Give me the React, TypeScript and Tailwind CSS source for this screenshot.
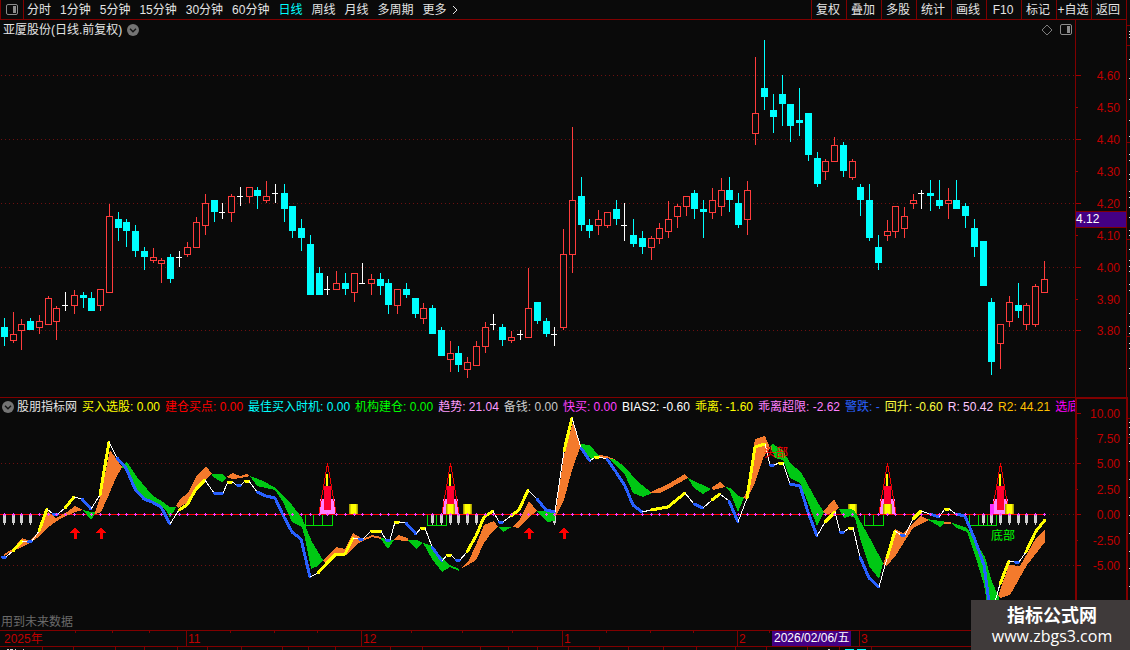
import { Fragment } from 'react'

const periods = ['分时', '1分钟', '5分钟', '15分钟', '30分钟', '60分钟', '日线', '周线', '月线', '多周期']
const actions = ['复权', '叠加', '多股', '统计', '画线', 'F10', '标记', '+自选', '返回']

const readings = [
  { text: '买入选股: 0.00', color: 'text-[#ffff00]' },
  { text: '建仓买点: 0.00', color: 'text-[#ff0000]' },
  { text: '最佳买入时机: 0.00', color: 'text-[#00ffff]' },
  { text: '机构建仓: 0.00', color: 'text-[#00ff00]' },
  { text: '趋势: 21.04', color: 'text-[#ff9cff]' },
  { text: '备钱: 0.00', color: 'text-[#c8c8c8]' },
  { text: '快买: 0.00', color: 'text-[#ff40ff]' },
  { text: 'BIAS2: -0.60', color: 'text-white' },
  { text: '乖离: -1.60', color: 'text-[#ffff00]' },
  { text: '乖离超限: -2.62', color: 'text-[#ff80ff]' },
  { text: '警跌: -', color: 'text-[#2a62ff]' },
  { text: '回升: -0.60', color: 'text-[#ffff40]' },
  { text: 'R: 50.42', color: 'text-[#ffc8ff]' },
  { text: 'R2: 44.21', color: 'text-[#ffc000]' },
  { text: '选底', color: 'text-[#ff00ff]' },
]

// high, body top, body bottom, low, kind: u = up, d = down, x = flat
type Candle = [number, number, number, number, 'u' | 'd' | 'x']
const candles: Candle[] = [
  [318, 327, 337, 346, 'd'], [312, 334, 341, 343, 'u'], [319, 324, 331, 350, 'u'], [318, 321, 330, 330, 'd'],
  [315, 321, 328, 334, 'u'], [296, 298, 325, 325, 'u'], [306, 308, 322, 340, 'u'], [292, 305, 306, 311, 'x'],
  [290, 295, 306, 314, 'u'], [292, 295, 298, 308, 'd'], [292, 298, 311, 311, 'd'], [289, 289, 306, 311, 'u'],
  [204, 216, 293, 293, 'u'], [212, 219, 228, 241, 'd'], [219, 222, 231, 247, 'd'], [225, 231, 251, 257, 'd'],
  [247, 251, 257, 270, 'd'], [248, 257, 261, 263, 'u'], [258, 260, 264, 283, 'u'], [254, 257, 279, 283, 'd'],
  [251, 257, 258, 267, 'x'], [242, 247, 255, 257, 'u'], [217, 222, 248, 248, 'u'], [194, 203, 226, 235, 'u'],
  [200, 200, 212, 222, 'd'], [203, 212, 213, 219, 'x'], [194, 196, 213, 222, 'u'], [187, 196, 197, 206, 'x'],
  [187, 187, 197, 203, 'u'], [187, 190, 196, 209, 'd'], [181, 196, 201, 203, 'u'], [184, 193, 194, 203, 'x'],
  [184, 193, 209, 222, 'd'], [206, 206, 231, 238, 'd'], [219, 228, 238, 251, 'd'], [235, 244, 295, 295, 'd'],
  [267, 273, 295, 295, 'd'], [276, 289, 290, 295, 'x'], [271, 283, 290, 290, 'u'], [273, 283, 289, 295, 'd'],
  [273, 273, 293, 302, 'u'], [263, 283, 284, 284, 'x'], [274, 279, 284, 295, 'u'], [273, 279, 286, 295, 'd'],
  [279, 283, 305, 314, 'd'], [289, 289, 306, 314, 'u'], [283, 289, 295, 298, 'd'], [298, 298, 314, 318, 'd'],
  [303, 308, 319, 324, 'u'], [305, 308, 334, 334, 'd'], [327, 330, 356, 356, 'd'], [341, 353, 360, 372, 'u'],
  [346, 353, 365, 372, 'd'], [357, 362, 370, 378, 'u'], [341, 346, 366, 366, 'u'], [322, 327, 347, 353, 'u'],
  [314, 324, 325, 330, 'x'], [324, 327, 340, 346, 'd'], [331, 337, 341, 343, 'u'], [330, 334, 335, 340, 'x'],
  [268, 308, 338, 338, 'u'], [302, 302, 321, 324, 'd'], [318, 321, 334, 337, 'd'], [327, 334, 335, 346, 'x'],
  [229, 254, 328, 330, 'u'], [127, 200, 255, 273, 'u'], [177, 196, 225, 231, 'd'], [219, 225, 231, 238, 'd'],
  [210, 219, 226, 235, 'u'], [212, 212, 226, 228, 'u'], [200, 209, 219, 225, 'd'], [203, 225, 226, 241, 'x'],
  [219, 235, 244, 247, 'd'], [231, 238, 247, 254, 'd'], [236, 238, 248, 260, 'u'], [223, 228, 239, 244, 'u'],
  [201, 219, 232, 238, 'u'], [204, 206, 217, 228, 'u'], [196, 196, 207, 216, 'u'], [190, 193, 209, 219, 'd'],
  [200, 209, 212, 238, 'd'], [188, 200, 213, 219, 'u'], [178, 190, 207, 216, 'u'], [177, 190, 200, 212, 'd'],
  [193, 203, 225, 228, 'd'], [181, 190, 220, 235, 'u'], [57, 113, 134, 145, 'u'], [40, 88, 97, 110, 'd'],
  [94, 110, 117, 133, 'd'], [75, 94, 104, 126, 'd'], [104, 104, 126, 142, 'd'], [88, 120, 123, 136, 'd'],
  [113, 113, 155, 161, 'd'], [152, 158, 184, 187, 'd'], [159, 161, 172, 180, 'u'], [137, 145, 162, 162, 'u'],
  [142, 145, 171, 177, 'd'], [159, 161, 178, 180, 'u'], [184, 187, 200, 216, 'd'], [184, 200, 238, 241, 'd'],
  [235, 247, 263, 270, 'd'], [220, 231, 236, 241, 'u'], [206, 206, 232, 238, 'u'], [207, 216, 229, 238, 'u'],
  [194, 200, 204, 209, 'u'], [190, 193, 194, 209, 'x'], [180, 193, 196, 211, 'd'], [180, 200, 206, 209, 'd'],
  [188, 200, 204, 219, 'u'], [180, 200, 209, 209, 'd'], [203, 206, 216, 228, 'd'], [219, 228, 247, 257, 'd'],
  [241, 241, 286, 286, 'd'], [298, 302, 362, 375, 'd'], [324, 324, 344, 369, 'u'], [296, 302, 322, 327, 'u'],
  [283, 305, 311, 318, 'd'], [303, 305, 325, 330, 'u'], [284, 286, 325, 327, 'u'], [261, 279, 293, 293, 'u'],
]
const candleX = (i: number) => Math.round(4 + i * 8.738)

const orange = [
  '4,554 13,549 22,538 30,541 39,531 48,512 56,518 67,512 75,506 83,510 75,512 60,519 47,528 37,538 30,543 22,547 13,551 4,556',
  '95,512 100,498 110,450 117,460 122,467 115,480 108,497 101,512 95,514',
  '176,506 180,499 188,493 196,477 206,466 212,474 205,480 196,490 187,503 178,508',
  '226,477 233,473 240,476 247,474 250,476 240,478 233,479',
  '323,560 336,547 345,549 353,533 363,539 372,535 381,537 381,539 372,537 363,541 357,544 346,555 336,554 325,563',
  '394,540 398,535 408,538 408,541',
  '460,569 468,562 476,545 484,525 494,521 498,527 492,532 484,543 476,560 468,565',
  '512,527 519,521 529,501 537,511 529,517 519,528',
  '555,516 564,455 573,422 581,445 572,470 564,500 557,514',
  '599,455 607,456 616,460 607,458 599,457',
  '649,493 670,483 685,474 688,478 670,488 660,493',
  '711,488 720,482 725,487 713,490',
  '743,498 747,492 755,439 765,436 770,448 763,458 755,483 747,499',
  '823,512 834,499 839,508 833,513 827,514',
  '883,564 895,529 903,533 921,516 929,520 913,528 896,555 887,566',
  '944,522 951,522 951,524 944,524',
  '998,596 1009,565 1020,566 1036,538 1045,530 1045,542 1027,565 1010,595 1000,598',
]

const green = [
  '83,510 91,512 96,512 91,520',
  '121,467 127,462 137,477 152,495 163,502 170,507 176,507 170,518 166,510 153,502 144,498 135,488 128,470',
  '212,474 223,474 226,478 222,482 213,477',
  '250,476 263,481 276,488 292,505 302,518 312,542 323,560 318,566 311,569 305,538 302,527 292,522 283,502 275,490 257,486',
  '380,538 394,540 388,549',
  '408,540 417,540 423,543 416,549',
  '423,543 432,546 442,558 450,565 459,569 459,571 450,567 442,572 432,559',
  '498,527 512,527 503,532',
  '537,511 555,512 555,521 547,522',
  '580,444 590,445 599,456 591,459 583,450',
  '607,456 617,461 625,467 637,481 652,493 643,497 633,493 625,475 616,466',
  '688,478 711,489 703,494 694,488',
  '725,487 730,488 739,496 744,498 738,512 730,492',
  '770,446 773,444 783,450 790,463 801,472 818,503 824,512 817,526 809,505 800,483 790,478 783,460 775,458',
  '839,509 850,509 854,510 872,542 883,563 879,579 869,566 860,538 855,518 850,516 844,518',
  '927,519 947,522 940,527',
  '950,522 967,528 976,542 985,557 992,582 999,597 999,603 987,603 984,585 975,555 967,532 957,528',
]

// Each point opens a segment towards the next one: w = thin, y = rising, b = falling
type Point = [number, number, 'w' | 'y' | 'b']
const bias: Point[] = [
  [2, 557, 'b'], [6, 557, 'w'], [13, 551, 'y'], [22, 541, 'w'], [28, 542, 'b'], [32, 541, 'w'], [39, 531, 'y'], [47, 509, 'w'], [53, 514, 'b'],
  [58, 514, 'w'], [65, 508, 'y'], [74, 497, 'w'], [82, 499, 'b'], [91, 509, 'w'], [100, 495, 'y'], [109, 442, 'w'],
  [117, 458, 'b'], [126, 468, 'b'], [135, 489, 'b'], [144, 499, 'b'], [152, 502, 'b'], [161, 507, 'b'], [170, 524, 'w'],
  [179, 510, 'y'], [187, 505, 'y'], [196, 489, 'y'], [205, 480, 'w'], [214, 493, 'b'], [223, 493, 'w'], [228, 482, 'y'],
  [232, 482, 'w'], [237, 485, 'b'], [241, 485, 'w'], [245, 481, 'y'], [249, 481, 'w'], [257, 492, 'b'], [266, 496, 'b'],
  [275, 498, 'b'], [283, 515, 'b'], [292, 532, 'b'], [301, 539, 'b'], [310, 577, 'w'], [318, 573, 'y'], [327, 563, 'y'],
  [336, 554, 'y'], [345, 554, 'y'], [353, 538, 'w'], [359, 539, 'b'], [363, 539, 'w'], [371, 531, 'y'], [381, 531, 'w'],
  [386, 540, 'b'], [390, 540, 'w'], [395, 522, 'y'], [399, 522, 'w'], [406, 523, 'b'], [416, 534, 'w'], [421, 528, 'y'],
  [425, 528, 'w'], [432, 547, 'b'], [442, 561, 'w'], [447, 555, 'y'], [451, 555, 'w'], [456, 560, 'b'], [460, 560, 'w'],
  [467, 552, 'y'], [476, 536, 'y'], [484, 517, 'y'], [493, 511, 'w'], [499, 522, 'b'], [503, 522, 'w'], [511, 516, 'y'],
  [519, 510, 'y'], [528, 490, 'w'], [537, 499, 'b'], [546, 510, 'b'], [555, 512, 'w'], [564, 451, 'y'], [572, 418, 'w'],
  [581, 448, 'b'], [590, 461, 'w'], [595, 457, 'y'], [599, 457, 'w'], [607, 459, 'b'], [616, 472, 'b'], [625, 486, 'b'],
  [633, 505, 'b'], [642, 512, 'w'], [651, 510, 'y'], [668, 507, 'y'], [685, 493, 'w'], [694, 504, 'b'], [703, 508, 'w'],
  [712, 500, 'y'], [720, 494, 'w'], [729, 501, 'b'], [738, 522, 'w'], [747, 498, 'y'], [755, 447, 'y'], [765, 444, 'w'],
  [770, 465, 'b'], [774, 465, 'w'], [779, 463, 'y'], [783, 463, 'w'], [790, 484, 'b'], [800, 486, 'b'], [808, 512, 'b'],
  [817, 536, 'w'], [825, 522, 'y'], [835, 512, 'w'], [840, 532, 'b'], [844, 532, 'w'], [849, 528, 'y'], [853, 528, 'w'],
  [860, 557, 'b'], [869, 578, 'b'], [879, 587, 'w'], [887, 558, 'y'], [895, 531, 'w'], [901, 535, 'b'], [905, 535, 'w'],
  [913, 519, 'y'], [921, 511, 'w'], [930, 514, 'b'], [939, 517, 'w'], [945, 509, 'y'], [949, 509, 'w'], [956, 514, 'b'],
  [965, 516, 'b'], [975, 540, 'b'], [984, 565, 'b'], [989, 602, 'w'], [995, 602, 'w'], [1000, 584, 'y'], [1009, 561, 'w'],
  [1015, 562, 'b'], [1019, 562, 'w'], [1026, 552, 'y'], [1036, 531, 'y'], [1045, 520, 'y'],
]
const strokes = { w: '#ffffff', y: '#ffff00', b: '#2860ff' }

const towers = [
  { x: 327, base: 510, box: 0 },
  { x: 450, base: 504, box: 446 },
  { x: 887, base: 504, box: 883 },
  { x: 1000, base: 510, box: 1005 },
]
const whiteBars = [4, 13, 21, 30, 432, 441, 450, 458, 467, 476, 554, 983, 991, 1000, 1009, 1018, 1026, 1035]
const greenBoxes = [
  'M305 514V525H332V514M313 514V525M322 514V525',
  'M427 514V525H446V514M436 514V525',
  'M864 514V525H883V514M873 514V525',
  'M969 514V525H996V514M978 514V525M987 514V525',
]
const arrows = [75, 101, 529, 564]

const prices = [
  { y: 75, text: '4.60' }, { y: 107, text: '4.50' }, { y: 139, text: '4.40' },
  { y: 171, text: '4.30' }, { y: 203, text: '4.20' }, { y: 235, text: '4.10' },
  { y: 267, text: '4.00' }, { y: 299, text: '3.90' }, { y: 330, text: '3.80' },
]
const levels = [
  { y: 413, text: '10.00' }, { y: 438, text: '7.50' }, { y: 463, text: '5.00' }, { y: 489, text: '2.50' },
  { y: 514, text: '0.00' }, { y: 540, text: '-2.50' }, { y: 565, text: '-5.00' },
]
const months = [
  { x: 186, text: '11' }, { x: 361, text: '12' }, { x: 562, text: '1' }, { x: 737, text: '2' }, { x: 859, text: '3' },
]
const weekTicks = [75, 112, 149, 230, 274, 317, 411, 462, 512, 606, 650, 693, 769]
const lowerTicks = [42, 73, 115, 144, 177, 207, 241, 282, 308, 335, 390, 422, 480, 508, 537, 568, 599, 628, 663, 696, 735, 766, 807, 839, 871]
const railMarks = [31, 34, 37, 59, 78, 99, 120, 136, 154, 160, 174, 179, 191, 197, 207, 217, 230, 235, 249, 260, 266, 271, 284, 290, 313, 326, 333, 343, 348, 368, 422, 427, 434, 443, 461, 479, 497, 515, 533, 551, 568, 586]

function Grid({ rows }: { rows: number[] }) {
  return (
    <>
      {rows.map((y) => (
        <line key={y} x1="1" x2="100%" y1={y + 0.5} y2={y + 0.5} stroke="#6e1010" strokeDasharray="1 3" />
      ))}
    </>
  )
}

function PanelIcon() {
  return (
    <svg className="h-3 w-3" viewBox="0 0 12 12" fill="none">
      <rect x="0.5" y="0.5" width="11" height="10" rx="1.5" stroke="#8c8c8c" />
      <rect x="7" y="2" width="3" height="7" fill="#8c8c8c" />
    </svg>
  )
}

function RoundChevron() {
  return (
    <svg className="h-3 w-3 shrink-0" viewBox="0 0 12 12" fill="none">
      <circle cx="6" cy="6" r="6" fill="#747474" />
      <path d="M3 4.8l3 3 3-3" stroke="#141414" strokeWidth="1.4" />
    </svg>
  )
}

function PriceChart() {
  return (
    <svg className="block h-[357px] w-full" shapeRendering="crispEdges">
      <g transform="translate(0 -40)">
        <Grid rows={[75, 139, 203, 267, 330]} />
        {candles.map(([high, top, bottom, low, kind], i) => {
          const x = candleX(i)
          const color = kind === 'u' ? '#ff3c3c' : kind === 'd' ? '#00ffff' : '#ffffff'
          return (
            <Fragment key={i}>
              <rect x={x} y={high} width="1" height={low - high} fill={color} />
              {kind === 'u' ? (
                <rect x={x - 2.5} y={top + 0.5} width="6" height={bottom - top - 1} fill="#0a0a0a" stroke={color} />
              ) : (
                <rect x={x - 3} y={top} width={kind === 'd' ? 7 : 6} height={bottom - top} fill={color} />
              )}
            </Fragment>
          )
        })}
      </g>
    </svg>
  )
}

function YellowBox({ x }: { x: number }) {
  return (
    <>
      <rect x={x} y="504" width="9" height="10" fill="#a8a000" />
      <rect x={x + 1} y="504" width="7" height="10" fill="#d8d000" />
      <rect x={x + 2} y="504" width="5" height="10" fill="#ffff00" />
    </>
  )
}

function IndicatorChart() {
  return (
    <svg className="block h-[199px] w-full" shapeRendering="crispEdges">
      <g transform="translate(0 -415)">
        <Grid rows={[463, 514, 565]} />

        {whiteBars.map((x) => (
          <path key={x} d={`M${x - 1} 515h3v8h-1v2h-1v-2h-1z`} fill="#d0d0d0" />
        ))}
        {greenBoxes.map((d) => (
          <path key={d} d={d} transform="translate(.5 .5)" stroke="#00e000" fill="none" />
        ))}
        {towers.map(({ x, base, box }) => (
          <Fragment key={x}>
            <rect x={x - 7} y="499" width="15" height="15" fill="#ff80ff" />
            <rect x={x - 3} y="486" width="7" height={base - 486} fill="#ff0030" />
            <rect x={x - 1} y="474" width="2" height="12" fill="#ffff00" />
            <path d={`M${x - 8} 513L${x + 0.5} 463.5L${x + 9} 513`} stroke="#f00000" fill="none" />
            {box > 0 && <YellowBox x={box} />}
          </Fragment>
        ))}
        <rect x="990" y="504" width="4" height="10" fill="#ff30ff" />
        <YellowBox x={349} />
        <YellowBox x={463} />
        <YellowBox x={848} />

        <rect x="0" y="514" width="1045" height="1" fill="#ff0000" />

        {green.map((points) => (
          <polygon key={points} points={points} fill="#00c814" />
        ))}
        {orange.map((points) => (
          <polygon key={points} points={points} fill="#f47a2c" />
        ))}

        {bias.slice(0, -1).map(([x, y, kind], i) => (
          <line
            key={i}
            x1={x}
            y1={y}
            x2={bias[i + 1][0]}
            y2={bias[i + 1][1]}
            stroke={strokes[kind]}
            strokeWidth={kind === 'w' ? 1 : 3}
            strokeLinecap={kind === 'w' ? 'butt' : 'round'}
          />
        ))}

        {candles.map((_, i) => (
          <path key={i} d={`M${candleX(i) - 1} 514h3v1h-3zM${candleX(i)} 513h1v3h-1z`} fill="#ff40ff" />
        ))}
        {arrows.map((x) => (
          <path key={x} d={`M${x} 527l5 6h-3v6h-3v-6h-4z`} fill="#ff0000" />
        ))}
        <text x="764" y="457" fill="#ff0000" fontSize="12">头部</text>
        <text x="991" y="540" fill="#00ff00" fontSize="12">底部</text>
      </g>
    </svg>
  )
}

function PriceAxis() {
  return (
    <svg className="block h-full w-full" shapeRendering="crispEdges">
      <g transform="translate(0 -20)">
        <rect x="0" y="20" width="1" height="378" fill="#800000" />
        {prices.map(({ y, text }, i) => (
          <Fragment key={text}>
            <rect x="1" y={y} width={i % 2 === 0 ? 5 : 2} height="1" fill="#a00000" />
            <text x="45" y={y + 5} textAnchor="end" fontSize="12" fill="#c00000">{text}</text>
          </Fragment>
        ))}
        <rect x="0.5" y="211.5" width="51" height="16" fill="#440084" stroke="#800000" />
        <text x="1" y="223" fontSize="12" fill="#ffffff">4.12</text>
      </g>
    </svg>
  )
}

function LevelAxis() {
  return (
    <svg className="block h-full w-full" shapeRendering="crispEdges">
      <g transform="translate(0 -399)">
        {levels.map(({ y, text }, i) => (
          <Fragment key={text}>
            <rect x="0" y={y} width={i % 2 === 0 ? 4 : 1} height="1" fill="#a00000" />
            <text x="43" y={y + 5} textAnchor="end" fontSize="12" fill="#c00000">{text}</text>
          </Fragment>
        ))}
      </g>
    </svg>
  )
}

function TimeAxis() {
  return (
    <svg className="block h-5 w-full" shapeRendering="crispEdges">
      <rect x="0" y="0" width="100%" height="1" fill="#800000" />
      <rect x="0" y="16" width="100%" height="1" fill="#800000" />
      {weekTicks.map((x) => (
        <rect key={x} x={x} y="1" width="1" height="2" fill="#800000" />
      ))}
      {lowerTicks.map((x) => (
        <rect key={x} x={x} y="17" width="1" height="3" fill="#800000" />
      ))}
      <text x="4" y="13" fontSize="12" fill="#c00000">2025年</text>
      {months.map(({ x, text }) => (
        <Fragment key={x}>
          <rect x={x} y="1" width="1" height="15" fill="#800000" />
          <text x={x + 2} y="13" fontSize="12" fill="#c00000">{text}</text>
        </Fragment>
      ))}
      <rect x="772" y="1" width="79" height="15" fill="#440084" />
      <text x="774" y="12" fontSize="12" fill="#ffffff">2026/02/06/五</text>
      <path d="M7 19.5h2m1 0h3m2 0h1m7 0h1M828 19.5h2" stroke="#d0d0d0" />
      <path d="M845 19.5h9m3 0h9" stroke="#00ffff" />
    </svg>
  )
}

function SideRail() {
  return (
    <svg className="block h-full w-1 shrink-0" shapeRendering="crispEdges">
      <rect x="0" y="0" width="1" height="100%" fill="#800000" />
      <rect x="0" y="397" width="2" height="233" fill="#800000" />
      {[25, 45, 142, 239, 336, 418, 437].map((y) => (
        <rect key={y} x="1" y={y} width="3" height="1" fill="#800000" />
      ))}
      {railMarks.map((y) => (
        <rect key={y} x="3" y={y} width="1" height="1" fill="#e0e0e0" />
      ))}
    </svg>
  )
}

export default function App() {
  return (
    <div className="relative flex h-screen w-full overflow-hidden bg-[#0a0a0a] font-['Liberation_Sans','Noto_Sans_CJK_SC',sans-serif] text-[12px] leading-4 text-[#e4e4e4]">
      <div className="flex min-w-0 flex-1 flex-col">
        <header className="flex h-5 items-stretch justify-between border-b border-[#800000] whitespace-nowrap">
          <div className="flex">
            <button aria-label="侧栏" className="flex w-6 items-center justify-center border-x border-[#800000]">
              <PanelIcon />
            </button>
            <nav className="flex items-center gap-[9px] pl-[3px]">
              {periods.map((period) => (
                <button key={period} className={period === '日线' ? 'text-[#00ffff]' : ''}>
                  {period}
                </button>
              ))}
              <button className="flex items-center gap-1">
                更多
                <svg className="h-2 w-2" viewBox="0 0 8 8" fill="none">
                  <path d="M2 0l4 4-4 4" stroke="#e4e4e4" />
                </svg>
              </button>
            </nav>
          </div>
          <div className="flex">
            {actions.map((action) => (
              <button key={action} className="w-[35px] border-l border-[#800000] pr-[2px] text-center">
                {action}
              </button>
            ))}
          </div>
        </header>

        <section className="flex">
          <div className="min-w-0 flex-1">
            <div className="flex h-5 items-center justify-between px-[3px]">
              <h1 className="flex items-center gap-[5px]">
                亚厦股份(日线.前复权)
                <RoundChevron />
              </h1>
              <div className="flex items-center gap-[7px]">
                <svg className="h-3 w-3" viewBox="0 0 12 12" fill="none">
                  <path d="M6 1l5 5-5 5-5-5z" stroke="#7c7c7c" />
                </svg>
                <PanelIcon />
              </div>
            </div>
            <PriceChart />
          </div>
          <div className="w-[51px]">
            <PriceAxis />
          </div>
        </section>

        <section className="flex">
          <div className="min-w-0 flex-1 border-t border-[#800000]">
            <div className="flex h-[17px] items-center gap-[5px] overflow-hidden pl-[2px] whitespace-nowrap">
              <div className="flex items-center gap-[3px]">
                <RoundChevron />
                <h2>股朋指标网</h2>
              </div>
              {readings.map(({ text, color }) => (
                <span key={text} className={color}>{text}</span>
              ))}
            </div>
            <IndicatorChart />
            <p className="h-4 pl-px text-[#6a6a6a]">用到未来数据</p>
          </div>
          <div className="w-[51px] border-t-2 border-l-2 border-[#800000]">
            <LevelAxis />
          </div>
        </section>

        <TimeAxis />
      </div>
      <SideRail />

      <div className="absolute right-0 bottom-0 flex h-[50px] w-[159px] flex-col items-center justify-center bg-[#3f3a3a] pt-px pl-[3px] text-white">
        <strong className="text-[18px] leading-5 font-bold">指标公式网</strong>
        <span className="font-['Open_Sans',sans-serif] text-[16px] leading-5">www.zbgs3.com</span>
      </div>
    </div>
  )
}
